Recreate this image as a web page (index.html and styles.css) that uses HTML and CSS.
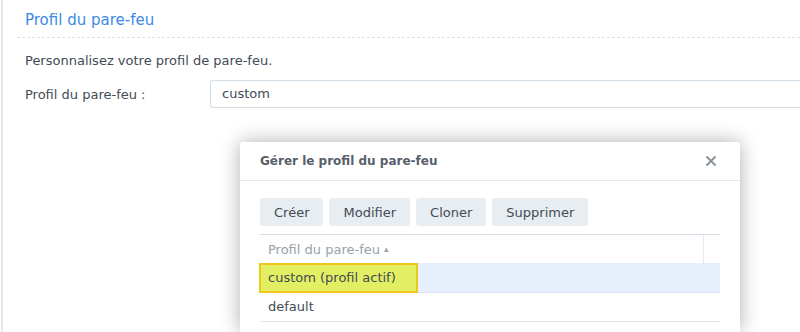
FILE: index.html
```html
<!DOCTYPE html>
<html lang="fr">
<head>
    <meta charset="UTF-8">
    <title>Profil du pare-feu</title>
    <link rel="stylesheet" href="styles.css">
</head>
<body>

<div class="page">
    <div class="section">
        <h2 class="section-title">Profil du pare-feu</h2>
        <p class="desc">Personnalisez votre profil de pare-feu.</p>
        <div class="field">
            <label class="field-label">Profil du pare-feu :</label>
            <div class="field-input">custom</div>
        </div>
    </div>
</div>

<div class="dialog">
    <div class="dialog-header">
        <span class="dialog-title">Gérer le profil du pare-feu</span>
        <svg class="close" width="12" height="12" viewBox="0 0 12 12">
            <path d="M1.5 1.5 L10.5 10.5 M10.5 1.5 L1.5 10.5" stroke="#8a939c" stroke-width="2" fill="none"/>
        </svg>
    </div>
    <div class="dialog-body">
        <div class="toolbar">
            <button class="btn">Créer</button>
            <button class="btn">Modifier</button>
            <button class="btn">Cloner</button>
            <button class="btn">Supprimer</button>
        </div>
        <div class="grid">
            <div class="grid-head">
                <div class="col">Profil du pare-feu <span class="sort">&#9652;</span></div>
                <div class="col-rest"></div>
            </div>
            <div class="row selected">
                <span class="mark">custom (profil actif)</span>
            </div>
            <div class="row">default</div>
        </div>
    </div>
</div>

</body>
</html>
```

FILE: styles.css
```css
body {
    margin: 0;
    font-family: "DejaVu Sans", Verdana, sans-serif;
    font-size: 13px;
    color: #414b55;
    background-color: white;
    height: 332px;
    overflow: hidden;
}
.page {
    margin-left: 1px;
    border-left: 2px solid #e3e9f0;
    height: 332px;
    padding-left: 14px;
}
.section-title {
    margin: 0;
    padding: 11px 0 8px 8px;
    font-size: 15px;
    font-weight: normal;
    color: #3a8ae6;
    border-bottom: 1px dashed #dbe1e8;
}
.desc {
    margin: 0;
    padding: 15px 0 0 8px;
    line-height: 16px;
}
.field {
    display: flex;
    align-items: center;
    margin-top: 11px;
    padding-left: 8px;
}
.field-label {
    width: 185px;
}
.field-input {
    flex: 1;
    height: 26px;
    line-height: 26px;
    border: 1px solid #d3dde6;
    border-right: none;
    border-radius: 3px 0 0 3px;
    padding-left: 11px;
}
.dialog {
    position: absolute;
    left: 240px;
    top: 142px;
    width: 500px;
    height: 190px;
    background-color: white;
    border-radius: 3px 3px 0 0;
    box-shadow: 0 0 20px rgba(0, 0, 0, 0.32);
}
.dialog-header {
    display: flex;
    justify-content: space-between;
    align-items: center;
    height: 38px;
    padding: 0 23px 0 20px;
    border-bottom: 1px solid #e3e8ed;
}
.dialog-title {
    font-size: 12px;
    font-weight: bold;
    color: #57606a;
}
.dialog-body {
    padding: 17px 20px 0 20px;
}
.toolbar {
    display: flex;
    gap: 6px;
}
.btn {
    font-family: inherit;
    font-size: 13px;
    color: #414b55;
    background-color: #e8edf2;
    border: none;
    border-radius: 3px;
    height: 28px;
    padding: 0 14px;
}
.grid {
    margin-top: 8px;
    border-top: 1px solid #d5dfe9;
}
.grid-head {
    display: flex;
    height: 28px;
}
.col {
    flex: 1;
    line-height: 28px;
    padding-left: 8px;
    color: #98a1ab;
    border-right: 1px solid #e7eaee;
}
.sort {
    font-size: 9px;
    vertical-align: 2px;
}
.col-rest {
    width: 16px;
}
.row {
    position: relative;
    height: 28px;
    line-height: 28px;
    padding-left: 8px;
    border-bottom: 1px solid #e3e6ea;
}
.row.selected {
    background-color: #e6f0fc;
    border-bottom-color: #d6e2ef;
    border-top: 1px solid #e6f0fc;
}
.mark {
    position: absolute;
    left: -1px;
    top: -1px;
    width: 148px;
    height: 26px;
    line-height: 26px;
    padding-left: 7px;
    background-color: #e3ef62;
    border: 2px solid #efc61a;
    color: #414b55;
}
```
